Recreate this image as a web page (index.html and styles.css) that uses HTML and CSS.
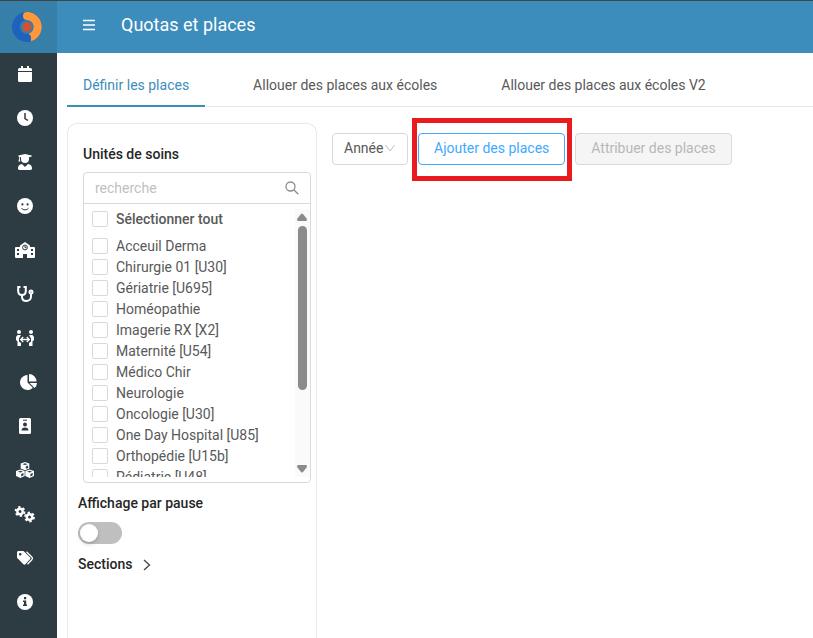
FILE: index.html
```html
<!DOCTYPE html>
<html lang="fr">
<head>
	<meta charset="UTF-8">
	<title>Quotas et places</title>
	<link rel="stylesheet" href="styles.css">
</head>
<body>
	<aside class="sidebar">
		<a href="#" class="logo" aria-label="Accueil">
			<svg width="32" height="32" viewBox="0 0 32 32">
				<circle cx="16" cy="16" r="11" fill="none" stroke="#1f62bd" stroke-width="8"/>
				<path d="M16 5a11 11 0 0 1 3 21.500" fill="none" stroke="#ff983a" stroke-width="8"/>
				<circle cx="16" cy="5" r="4" fill="#ff983a"/>
				<circle cx="16" cy="27" r="4" fill="#1f62bd"/>
				<circle cx="16" cy="16" r="4.500" fill="#dc4f2a"/>
			</svg>
		</a>
		<nav class="menu">
			<a href="#" aria-label="Calendrier"><svg width="14" height="16" viewBox="0 0 14 16"><path d="M3 0h2v2h4V0h2v2h1.500a1.500 1.500 0 0 1 1.500 1.500V5H0V3.500A1.500 1.500 0 0 1 1.500 2H3zM0 6h14v8.500a1.500 1.500 0 0 1-1.500 1.500h-11A1.500 1.500 0 0 1 0 14.500z"/></svg></a>
			<a href="#" aria-label="Horaires"><svg width="16" height="16" viewBox="0 0 16 16"><circle cx="8" cy="8" r="8"/><path class="cut" d="M8 3v5.500l3 2"/></svg></a>
			<a href="#" aria-label="Étudiants"><svg width="14" height="16" viewBox="0 0 14 16"><path d="M.5 1.600 7 0l6.500 1.600c.6.200.6.800 0 1L11 3.300V5a4 4 0 0 1-8 0V3.300l-1.200-.3v2l.6 2.500H.4L1 5V2.800l-.5-.2c-.6-.2-.6-.8 0-1zM4 10l3 3 3-3c2.400.2 4 2 4 4v.600c0 .8-.6 1.400-1.400 1.400H1.400C.6 16 0 15.400 0 14.600V14c0-2 1.600-3.800 4-4z"/></svg></a>
			<a href="#" aria-label="Satisfaction"><svg width="16" height="16" viewBox="0 0 16 16"><circle cx="8" cy="8" r="8"/><circle class="hole" cx="5.400" cy="6.400" r="1.100"/><circle class="hole" cx="10.600" cy="6.400" r="1.100"/><path class="thin" d="M4.500 10.200c1.800 2.200 5.200 2.200 7 0"/></svg></a>
			<a href="#" aria-label="Écoles"><svg width="20" height="16" viewBox="0 0 20 16"><path d="M10 0l5 3.400V5h4a1 1 0 0 1 1 1v9a1 1 0 0 1-1 1h-7v-4H8v4H1a1 1 0 0 1-1-1V6a1 1 0 0 1 1-1h4V3.400z"/><circle class="thin" cx="10" cy="5.500" r="2.400"/><path class="thin" d="M10 4v1.700h1.500"/><path class="hole" d="M2 7h2v2H2zm0 4h2v2H2zm14-4h2v2h-2zm0 4h2v2h-2z"/></svg></a>
			<a href="#" aria-label="Soins"><svg width="16" height="16" viewBox="0 0 16 16"><path class="line" d="M3.500 1H1.200v4c0 2.500 1.500 4 3.800 4s3.800-1.500 3.800-4V1H6.500M5 9v1.500c0 2.800 1.800 4.500 4.300 4.500S14 13.300 14 10.500V8"/><circle class="line" cx="14" cy="6" r="1.500"/></svg></a>
			<a href="#" aria-label="Échanges"><svg width="20" height="16" viewBox="0 0 20 16"><circle cx="4" cy="2" r="2"/><circle cx="16" cy="2" r="2"/><path d="M2.500 5H6L4 8.500v3L6 13v3H2.500v-4.500L1 10V7zM17.500 5H14l2 3.500v3L14 13v3h3.500v-4.500L19 10V7z"/><path class="line arrow" d="M6 9.500h8M8.200 7 5.700 9.500l2.500 2.500M11.800 7l2.500 2.500-2.500 2.500"/></svg></a>
			<a href="#" class="pie" aria-label="Statistiques"><svg width="17" height="16" viewBox="0 0 17 16"><path d="M7.500 1v7.500l5.300 5.300A7.500 7.500 0 1 1 7.500 1zM9 0a7.500 7.500 0 0 1 7.500 7.500H9zM9.500 9H17a7.500 7.500 0 0 1-2.400 5.100z"/></svg></a>
			<a href="#" aria-label="Badges"><svg width="12" height="16" viewBox="0 0 12 16"><rect width="12" height="16" rx="1.500"/><path class="thin" d="M4 2.200h4"/><circle class="hole" cx="6" cy="6.500" r="2"/><path class="hole" d="M2.500 12.500c0-2 1.300-3 3.500-3s3.500 1 3.500 3z"/></svg></a>
			<a href="#" aria-label="Stocks"><svg width="18" height="16" viewBox="0 0 18 16"><path d="M9 0l4.300 1.600v5L9 8.300 4.700 6.600v-5zM4.400 7.400l4.300 1.700v4.800L4.400 16 0 13.900V9.100zM13.600 7.400 18 9.100v4.800L13.600 16l-4.300-2.100V9.100z"/><path class="hole" d="M9 1.300l2.500.9L9 3.100l-2.500-.9zM9.800 4.500l2.300-.9v2.300l-2.300.9zM4.400 8.800l2.500.9-2.500.9-2.500-.9zM5.200 12l2.300-.9v2.200l-2.300 1.200zM13.600 8.800l2.500.9-2.500.9-2.500-.9zM14.400 12l2.300-.9v2.200l-2.300 1.200z"/></svg></a>
			<a href="#" aria-label="Paramètres"><svg width="20" height="16" viewBox="0 0 20 16"><circle class="gear" cx="5" cy="5.500" r="2.700"/><circle class="teeth" cx="5" cy="5.500" r="4.400"/><circle class="gear" cx="14.500" cy="11" r="2.700"/><circle class="teeth" cx="14.500" cy="11" r="4.400"/></svg></a>
			<a href="#" aria-label="Étiquettes"><svg width="16" height="14" viewBox="0 0 16 14"><path d="M1 0h5.500L13 6.300c.7.700.7 1.400 0 2l-4.600 4.900c-.6.600-1.400.6-2 0L0 6.700V1z"/><circle class="hole" cx="3.200" cy="3.300" r="1.200"/><path class="line tag" d="M9.500.7 14.800 6c.9.900.9 1.900 0 2.800l-4.300 4.500"/></svg></a>
			<a href="#" aria-label="Informations"><svg width="16" height="16" viewBox="0 0 16 16"><circle cx="8" cy="8" r="8"/><path class="hole" d="M7 3h2.200v2.200H7zM6 6.500h3.200v4H10V12H6v-1.500h1V8H6z"/></svg></a>
		</nav>
	</aside>
	<div class="page">
		<header class="header">
			<button type="button" class="burger" aria-label="Menu">
				<svg width="12" height="12" viewBox="0 0 12 12"><path d="M0 1.500h12M0 6h12M0 10.500h12" stroke="#fff" stroke-width="1.500"/></svg>
			</button>
			<h1>Quotas et places</h1>
		</header>
		<main class="content">
			<nav class="tabs">
				<a href="#" class="active">Définir les places</a>
				<a href="#">Allouer des places aux écoles</a>
				<a href="#">Allouer des places aux écoles V2</a>
			</nav>
			<div class="columns">
				<section class="panel">
					<div class="units">
						<h2>Unités de soins</h2>
						<div class="unitBox">
							<div class="search">
								<input type="text" placeholder="recherche" aria-label="recherche">
								<svg width="14" height="14" viewBox="0 0 14 14"><circle cx="5.500" cy="5.500" r="4.500"/><path d="M8.800 8.800 13.300 13.300"/></svg>
							</div>
							<div class="listWrap">
								<div class="list">
									<label class="all"><input type="checkbox">Sélectionner tout</label>
									<label><input type="checkbox">Acceuil Derma</label>
									<label><input type="checkbox">Chirurgie 01 [U30]</label>
									<label><input type="checkbox">Gériatrie [U695]</label>
									<label><input type="checkbox">Homéopathie</label>
									<label><input type="checkbox">Imagerie RX [X2]</label>
									<label><input type="checkbox">Maternité [U54]</label>
									<label><input type="checkbox">Médico Chir</label>
									<label><input type="checkbox">Neurologie</label>
									<label><input type="checkbox">Oncologie [U30]</label>
									<label><input type="checkbox">One Day Hospital [U85]</label>
									<label><input type="checkbox">Orthopédie [U15b]</label>
									<label><input type="checkbox">Pédiatrie [U48]</label>
								</div>
								<div class="scroll">
									<svg width="10" height="8" viewBox="0 0 10 8"><path d="M4 1q1-1 2 0l4 5q0 2-1 2H1Q0 8 0 6z"/></svg>
									<div class="track"><div class="thumb"></div></div>
									<svg width="10" height="8" viewBox="0 0 10 8"><path d="M4 7q1 1 2 0l4-5q0-2-1-2H1Q0 0 0 2z"/></svg>
								</div>
							</div>
						</div>
					</div>
					<label for="pause" class="title">Affichage par pause</label>
					<input type="checkbox" id="pause" class="switch">
					<button type="button" class="title sections">Sections
						<svg width="8" height="12" viewBox="0 0 8 12"><path d="M1 1l5.500 5L1 11"/></svg>
					</button>
				</section>
				<section class="actions">
					<div class="year">
						<select aria-label="Année"><option>Année</option></select>
						<svg width="10" height="8" viewBox="0 0 10 8"><path d="M.5 1 5 7l4.500-6"/></svg>
					</div>
					<div class="framed">
						<button type="button" class="btn primary">Ajouter des places</button>
					</div>
					<button type="button" class="btn" disabled>Attribuer des places</button>
				</section>
			</div>
		</main>
	</div>
</body>
</html>
```

FILE: styles.css
```css
*{
	box-sizing:border-box;
}
body{
	display:flex;
	height:100vh;
	margin:0;
	overflow:hidden;
	border-top:1px solid #444;
	font-family:Roboto,"Liberation Sans",sans-serif;
	font-size:14px;
	line-height:21px;
	color:#595959;
	background-color:#fff;
}
h1,h2{
	margin:0;
}
a{
	color:inherit;
	text-decoration:none;
}
button,input,select{
	margin:0;
	font:inherit;
	color:inherit;
}
.sidebar{
	flex:none;
	width:57px;
	background-color:#2d3b42;
}
.logo{
	display:flex;
	align-items:center;
	height:52px;
	padding-left:11px;
	background-color:#367fa9;
}
.menu a{
	display:flex;
	align-items:center;
	justify-content:center;
	width:50px;
	height:44px;
	padding-bottom:2px;
}
.menu .pie{
	padding-left:6px;
}
.menu svg{
	fill:#fff;
	overflow:visible;
}
.menu .hole{
	fill:#2d3b42;
}
.menu .cut,.menu .thin{
	fill:none;
	stroke:#2d3b42;
	stroke-width:1.5;
}
.menu .thin{
	stroke-width:1;
}
.menu .line{
	fill:none;
	stroke:#fff;
	stroke-width:2;
}
.menu .tag,.menu .arrow{
	stroke-width:1.3;
}
.menu .gear,.menu .teeth{
	fill:none;
	stroke:#fff;
	stroke-width:2.4;
}
.menu .teeth{
	stroke-width:2;
	stroke-dasharray:2.3 2.3;
}
.page{
	flex:1;
	display:flex;
	flex-direction:column;
	min-width:0;
}
.header{
	flex:none;
	display:flex;
	align-items:center;
	gap:20px;
	height:52px;
	padding:0 20px 4px;
	background-color:#3c8dbc;
}
.burger{
	display:flex;
	padding:6px;
	border:0;
	background:none;
}
.header h1{
	font-size:18px;
	font-weight:400;
	line-height:24px;
	color:#fff;
}
.content{
	flex:1;
	display:flex;
	flex-direction:column;
	min-height:0;
	padding-left:10px;
}
.tabs{
	display:flex;
	gap:32px;
	padding-top:10px;
	box-shadow:inset 0 -1px #e8e8e8;
}
.tabs a{
	padding:12px 16px 9px;
	border-bottom:2px solid transparent;
	white-space:nowrap;
}
.tabs .active{
	color:#3c8dbc;
	border-color:#3c8dbc;
}
.columns{
	flex:1;
	display:flex;
	gap:15px;
	min-height:0;
	padding-top:16px;
}
.panel{
	flex:none;
	width:250px;
	padding:20px 5px 0 10px;
	border:1px solid #e8e8e8;
	border-bottom:0;
	border-radius:10px 10px 0 0;
}
.units{
	padding-left:5px;
}
.units h2,.title{
	font-size:14px;
	font-weight:500;
	line-height:21px;
	color:#262626;
}
.unitBox{
	height:311px;
	margin:7px 0 10px;
	border:1px solid #d9d9d9;
	border-radius:4px;
}
.search{
	display:flex;
	align-items:center;
	height:31px;
	padding:0 11px;
	border-bottom:1px solid #d9d9d9;
}
.search input{
	flex:1;
	min-width:0;
	padding:0;
	border:0;
	outline:none;
	background:none;
}
.search input::placeholder{
	color:#bfbfbf;
}
.search svg,.sections svg,.year svg{
	fill:none;
	stroke:#8c8c8c;
	stroke-width:1.3;
}
.listWrap{
	display:flex;
	height:268px;
	margin-top:5px;
}
.list{
	flex:1;
	padding-left:8px;
	overflow:hidden;
}
.list label{
	display:flex;
	align-items:flex-start;
	gap:8px;
	height:21px;
}
.list .all{
	margin-bottom:6px;
	font-weight:500;
}
.list input{
	appearance:none;
	width:16px;
	height:16px;
	margin-top:2px;
	border:1px solid #d9d9d9;
	border-radius:2px;
	background-color:#fff;
}
.scroll{
	display:flex;
	flex-direction:column;
	align-items:center;
	width:15px;
	padding:4px 1px 4px 0;
	background-color:#fafafa;
}
.scroll svg{
	fill:#8b8b8b;
}
.track{
	flex:1;
	padding:5px 0;
}
.thumb{
	width:9px;
	height:70%;
	border-radius:5px;
	background-color:#8b8b8b;
}
.title{
	display:block;
}
.switch{
	appearance:none;
	display:block;
	width:44px;
	height:22px;
	margin:8px 0 10px;
	padding:2px;
	border-radius:11px;
	background-color:#bfbfbf;
}
.switch::before{
	content:"";
	display:block;
	width:18px;
	height:18px;
	border-radius:50%;
	background-color:#fff;
	box-shadow:0 2px 4px rgba(0,35,11,.2);
}
.switch:checked{
	background-color:#3c8dbc;
}
.switch:checked::before{
	margin-left:auto;
}
.sections{
	display:flex;
	align-items:center;
	gap:11px;
	padding:0;
	border:0;
	background:none;
}
.sections svg{
	stroke:#434343;
}
.actions{
	display:flex;
	align-items:flex-start;
	gap:10px;
	padding-top:10px;
}
.year{
	display:flex;
	align-items:center;
	width:76px;
	height:32px;
	padding:0 12px 2px 11px;
	border:1px solid #d9d9d9;
	border-radius:4px;
}
.year select{
	appearance:none;
	flex:1;
	min-width:0;
	padding:0;
	border:0;
	outline:none;
	background:none;
}
.year svg{
	flex:none;
	stroke:#bfbfbf;
	stroke-width:1;
}
.btn{
	height:32px;
	padding:0 15px 2px;
	border:1px solid #d9d9d9;
	border-radius:4px;
	background-color:#fff;
	white-space:nowrap;
}
.btn.primary{
	color:#40a9ff;
	border-color:#40a9ff;
}
.btn:disabled{
	color:#b8b8b8;
	background-color:#f5f5f5;
}
.framed{
	position:relative;
}
.framed::after{
	content:"";
	position:absolute;
	inset:-15px -7px -16px -6px;
	border:5px solid #e91b1e;
	pointer-events:none;
}
```
